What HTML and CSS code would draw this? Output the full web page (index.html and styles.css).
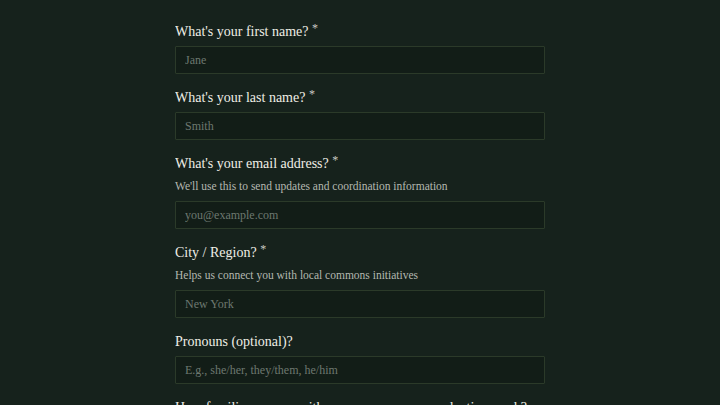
FILE: index.html
```html
<!DOCTYPE html>
<html lang="en">
<head>
  <meta charset="UTF-8">
  <title>Join the commons</title>
  <link rel="stylesheet" href="styles.css">
</head>
<body>
<main class="signup">
  <form class="signup-form">
    <div class="field">
      <label for="first-name">What's your first name? <span class="req">*</span></label>
      <input type="text" id="first-name" placeholder="Jane">
    </div>
    <div class="field">
      <label for="last-name">What's your last name? <span class="req">*</span></label>
      <input type="text" id="last-name" placeholder="Smith">
    </div>
    <div class="field">
      <label for="email">What's your email address? <span class="req">*</span></label>
      <p class="help">We'll use this to send updates and coordination information</p>
      <input type="email" id="email" placeholder="you@example.com">
    </div>
    <div class="field">
      <label for="city">City / Region? <span class="req">*</span></label>
      <p class="help">Helps us connect you with local commons initiatives</p>
      <input type="text" id="city" placeholder="New York">
    </div>
    <div class="field">
      <label for="pronouns">Pronouns (optional)?</label>
      <input type="text" id="pronouns" placeholder="E.g., she/her, they/them, he/him">
    </div>
    <div class="field">
      <label for="familiar">How familiar are you with commons or peer production work?</label>
      <input type="text" id="familiar">
    </div>
  </form>
</main>
</body>
</html>
```

FILE: styles.css
```css
*{
  box-sizing: border-box;
}
body{
  margin: 0;
  padding: 0;
  background: #16221c;
  color: #ecebe3;
  font-family: "Liberation Serif", "DejaVu Serif", serif;
}
.signup{
  width: 370px;
  margin: 0 auto;
  padding-top: 22px;
}
.field{
  margin-bottom: 14px;
}
.field label{
  display: block;
  font-size: 14px;
  line-height: 20px;
  height: 20px;
  margin-bottom: 4px;
  color: #efeee6;
  white-space: nowrap;
  overflow: hidden;
}
.field .req{
  display: inline-block;
  font-size: 12px;
  line-height: 12px;
  vertical-align: top;
  color: #c9cbc3;
}
.help{
  margin: 0 0 7px 0;
  font-size: 11.5px;
  line-height: 16px;
  color: #b4b8b0;
}
.field input{
  display: block;
  width: 100%;
  height: 28px;
  padding: 0 9px;
  background: #121d17;
  border: 1px solid #2b3a29;
  border-radius: 1px;
  color: #ecebe3;
  font-family: inherit;
  font-size: 12px;
  outline: none;
}
.field input::placeholder{
  color: #6d7870;
}
```
